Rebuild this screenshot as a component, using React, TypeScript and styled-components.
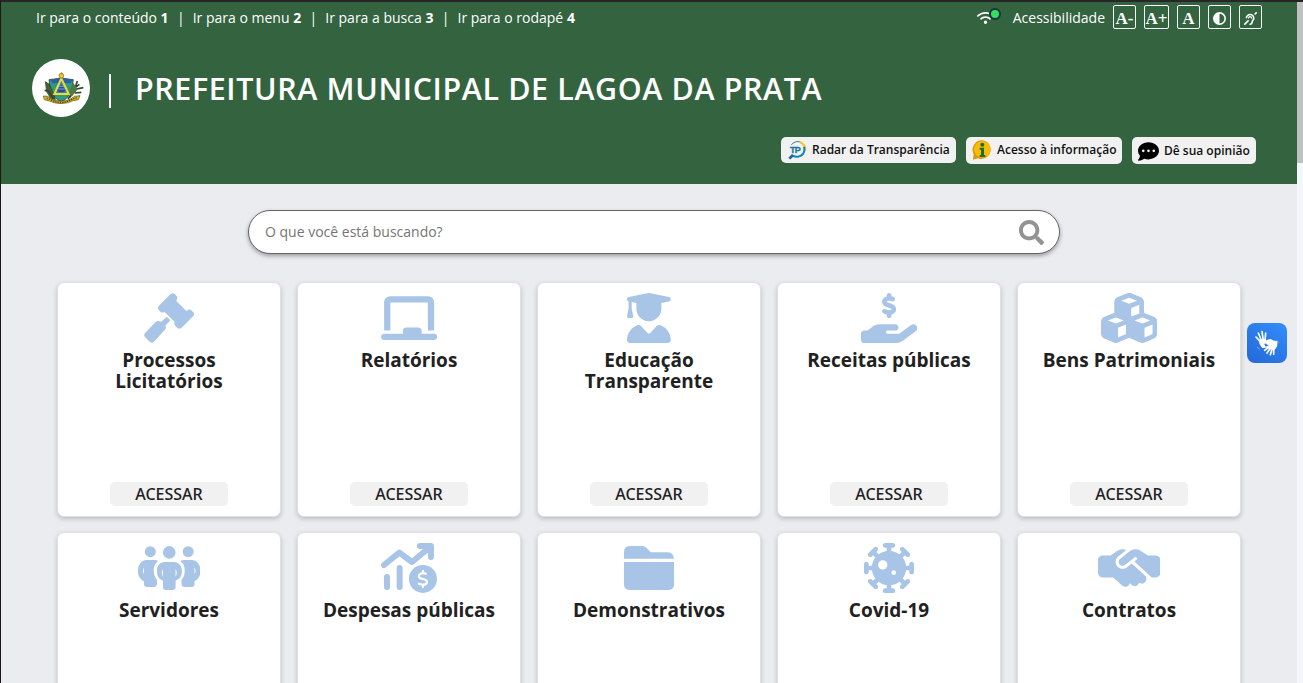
import React from 'react';
import styled, { createGlobalStyle } from 'styled-components';
import {
  FaUserGraduate,
  FaCubes,
  FaHandHoldingDollar,
  FaHandshakeSimple,
  FaChalkboard,
  FaVirusCovid,
  FaWifi,
  FaCircleHalfStroke,
  FaEarDeaf,
  FaCommentDots,
  FaDollarSign,
} from 'react-icons/fa6';
import { FaSearch } from 'react-icons/fa';

const GlobalStyle = createGlobalStyle`
  * { box-sizing: border-box; }
  body {
    margin: 0;
    overflow: hidden;
    background: #ebecf0;
    font-family: "Open Sans", "Noto Sans", sans-serif;
    color: #212121;
  }
  a { color: inherit; text-decoration: none; }
  button { font: inherit; color: inherit; border: 0; padding: 0; cursor: pointer; }
`;

const Window = styled.div`
  display: flex;
  height: 683px;
  overflow: hidden;
  border-top: 2px solid #29262a;
  border-left: 1px solid #1d171b;
`;

const Page = styled.div`
  flex: 1;
  min-width: 0;
`;

const ScrollTrack = styled.div`
  width: 6px;
  background: #f4f6fb;
`;

const ScrollThumb = styled.div`
  height: 161px;
  background: #c1c1c1;
`;

const Header = styled.header`
  display: flex;
  flex-direction: column;
  height: 182px;
  background: #33633f;
  color: #fff;
`;

const TopBar = styled.div`
  display: flex;
  justify-content: space-between;
  height: 32px;
  padding: 3px 35px 0 35px;
  font-size: 14px;
  line-height: 26px;
`;

const SkipLinks = styled.nav`
  display: flex;
  white-space: pre;
`;

const SkipLink = styled.a`
  & + &::before {
    content: "|";
    margin: 0 8.1px 0 8.3px;
  }
`;

const Accessibility = styled.div`
  display: flex;
  align-items: flex-start;
`;

const AccessLabel = styled.span`
  margin: 0 8px 0 12px;
`;

const Signal = styled.span`
  position: relative;
  display: flex;
  width: 24px;
  height: 24px;
  padding-top: 6px;
  svg { width: 17px; height: 14px; }
`;

const Dot = styled.i`
  position: absolute;
  left: 12px;
  top: 3px;
  width: 12px;
  height: 12px;
  border: 2px solid #17304a;
  border-radius: 50%;
  background: #35de5b;
`;

const AccessButton = styled.button<{ $w?: number; $gap?: number }>`
  display: flex;
  align-items: center;
  justify-content: center;
  width: ${(p) => p.$w ?? 23}px;
  height: 24px;
  margin-right: ${(p) => p.$gap ?? 8}px;
  border: 1px solid #fff;
  border-radius: 2px;
  background: transparent;
  color: #fff;
  font: bold 17px/22px "Liberation Serif", serif;
  padding-top: 3px;
  svg { width: 13px; height: 13px; }
`;

const Brand = styled.div`
  display: flex;
  align-items: center;
  height: 58px;
  margin: 25px 0 0 31px;
`;

const Crest = styled.div`
  width: 58px;
  height: 58px;
  border-radius: 50%;
  background: #fff;
  svg { display: block; width: 58px; height: 58px; }
`;

const Divider = styled.span`
  width: 2px;
  height: 34px;
  margin: 5px 24px 0 19px;
  background: #fff;
`;

const Title = styled.h1`
  margin: 2px 0 0;
  font-size: 30.4px;
  font-weight: 600;
  line-height: 44px;
  letter-spacing: 0.63px;
  white-space: nowrap;
`;

const HeaderActions = styled.div`
  display: flex;
  justify-content: flex-end;
  gap: 10px;
  margin: 20px 41px 0 0;
`;

const ActionButton = styled.a<{ $w: number; $h: number; $drop?: number }>`
  display: flex;
  align-items: center;
  gap: 5px;
  width: ${(p) => p.$w}px;
  height: ${(p) => p.$h}px;
  padding: ${(p) => p.$drop ?? 0}px 0 0 6px;
  border-radius: 5px;
  background: #f1f1f1;
  color: #111;
  font-size: 12px;
  font-weight: 600;
  line-height: 18px;
  white-space: nowrap;
  svg { flex: none; }
`;

const Search = styled.form`
  display: flex;
  align-items: center;
  justify-content: space-between;
  width: 812px;
  height: 44px;
  margin: 26px 0 0 247px;
  padding: 0 15px 0 16px;
  border: 1px solid #666;
  border-radius: 22px;
  background: #fff;
  box-shadow: 0 2px 4px rgba(0, 0, 0, 0.35);
  font-size: 14px;
  color: #757575;
  span { padding-bottom: 1px; }
  svg { width: 25px; height: 25px; color: #939393; }
`;

const Grid = styled.main`
  display: grid;
  grid-template-columns: repeat(5, 224px);
  grid-auto-rows: 235px;
  gap: 15px 16px;
  margin: 28px 0 0 56px;
`;

const Card = styled.article`
  display: flex;
  flex-direction: column;
  align-items: center;
  padding: 10px 9px;
  border: 1px solid #dfe0e3;
  border-radius: 7px;
  background: #fff;
  box-shadow: 0 2px 5px rgba(0, 0, 0, 0.2);
`;

const CardIcon = styled.div<{ $w: number }>`
  height: 50px;
  color: #a8c4e7;
  > svg { display: block; height: 50px; width: ${(p) => p.$w}px; }
`;

const CardTitle = styled.h2`
  margin: 7px 0 0;
  font-size: 19px;
  font-weight: 700;
  line-height: 21px;
  text-align: center;
`;

const CardButton = styled.button`
  width: 118px;
  height: 24px;
  margin-top: auto;
  border-radius: 5px;
  background: #f1f1f1;
  font-family: "Noto Sans", "Open Sans", sans-serif;
  font-size: 16px;
  font-weight: 500;
  line-height: 24px;
`;

const SignWidget = styled.button`
  position: fixed;
  left: 1247px;
  top: 323px;
  width: 40px;
  height: 40px;
  border-radius: 8px;
  background: linear-gradient(35deg, #2468d8, #338dfb);
  svg { display: block; }
`;

const Gavel = () => (
  <svg viewBox="0 0 150 150" fill="currentColor">
    <path d="M80 3Q86-2 92 3L98 9Q102 14 98 20L97 24L127 54Q133 48 140 50L148 58Q152 63 148 69L112 105Q106 110 100 105L94 99Q90 94 92 87L62 57Q56 60 50 57L44 51Q40 45 44 39Z" />
    <path d="M34 88Q40 82 46 85L52 86L68 71L79 82L64 98Q68 104 63 110L29 147Q23 152 18 147L3 132Q-2 126 3 120Z" />
  </svg>
);

const SIDE_BODY =
  'M26 51H49Q56 51 61 54C50 62 46 72 48 90C49 100 53 106 57 110V123Q56 132 48 132H27Q18 132 18 124V115C6 108 0 99 0 84C0 65 11 51 26 51ZM18 73Q12 83 18 94Z';

const People = () => (
  <svg viewBox="0 0 188 150" fill="currentColor" fillRule="evenodd">
    <circle cx="37" cy="26" r="16.5" />
    <circle cx="151" cy="26" r="16.5" />
    <circle cx="94" cy="28" r="19" />
    <path d={SIDE_BODY} />
    <path d={SIDE_BODY} transform="translate(188 0) scale(-1 1)" />
    <path d="M81 57H107C122 57 132 68 132 84C132 101 124 109 113 113V132Q113 141 104 141H84Q75 141 75 132V113C64 109 57 101 57 84C57 68 66 57 81 57ZM75 78Q68 89 75 101ZM113 78Q120 89 113 101Z" />
  </svg>
);

const MoneyChart = () => (
  <svg viewBox="0 0 169 150" fill="none" stroke="currentColor" strokeLinecap="round" strokeLinejoin="round">
    <path d="M9 66L55 29L93 57L144 15" strokeWidth="18" />
    <path d="M117 9H150V42" strokeWidth="18" />
    <path d="M128 9H150V29Z" fill="currentColor" strokeWidth="8" />
    <path d="M18 102V132M56 75V132" strokeWidth="18" />
    <circle cx="126" cy="108" r="42" fill="currentColor" stroke="none" />
    <FaDollarSign x="98.5" y="80.5" size={55} color="#fff" />
  </svg>
);

const Folder = () => (
  <svg viewBox="0 0 150 150" fill="currentColor">
    <path d="M0 47V27Q0 9 18 9H54Q62 9 68 15L77 25Q79 28 83 28H132Q148 29 150 47Z" />
    <path d="M0 57H150V124Q150 141 133 141H17Q0 141 0 124Z" />
  </svg>
);

const CrestArt = () => (
  <svg viewBox="0 0 174 174">
    <path d="M51 62L88 57L124 62L120 90Q110 120 88 128Q62 118 54 90Z" fill="#2f9a7c" stroke="#222" strokeWidth="2" />
    <path d="M54 62L88 57L121 62L116 72L62 73Z" fill="#2c5fae" />
    <path d="M40 68L52 76L62 98L70 122L56 118L44 98Z" fill="#4b6134" stroke="#2a3020" strokeWidth="2" />
    <path d="M38 94L50 96L64 118M136 66L128 92L108 120M154 86L134 90L112 116M142 76L122 92M148 100L128 102" stroke="#31472f" strokeWidth="5" fill="none" />
    <path d="M124 72L136 90L120 112L108 106Z" fill="#54793f" />
    <path d="M88 58L67 105H110Z" fill="#3f86c9" stroke="#f0dc2b" strokeWidth="6" />
    <path d="M76 94L88 76L101 94L96 100H80Z" fill="#234f91" />
    <path d="M82 82H95M79 90H98" stroke="#a9c9e6" strokeWidth="2" />
    <circle cx="88" cy="50" r="7" fill="#edcf29" stroke="#6d5a1a" strokeWidth="2" />
    <path d="M88 40V46" stroke="#a58a1d" strokeWidth="3" />
    <path d="M34 111L47 112L60 121Q88 132 114 121L128 112L144 110L139 122L124 125Q88 142 52 126L37 122Z" fill="#d8b92a" stroke="#5b4915" strokeWidth="2" />
    <path d="M44 117L60 124Q88 138 118 122L134 116" stroke="#54420f" strokeWidth="4" strokeDasharray="4 3" fill="none" />
  </svg>
);

const RadarLogo = () => (
  <svg width="20" height="20" viewBox="0 0 60 60">
    <path d="M13 14Q28-2 46 9" fill="none" stroke="#3c7891" strokeWidth="3" />
    <path d="M38 6Q57 14 55 32" fill="none" stroke="#f1c925" strokeWidth="6" />
    <path d="M51 20Q57 43 34 50Q25 52 18 47" fill="none" stroke="#1784ba" strokeWidth="6" />
    <path d="M18 45L7 56" stroke="#176994" strokeWidth="8" />
    <text x="9" y="38" fontFamily="Liberation Sans, sans-serif" fontSize="27" fontWeight="700" letterSpacing="-2" fill="#1879a7" stroke="#1879a7" strokeWidth="1">TP</text>
  </svg>
);

const InfoLogo = () => (
  <svg width="20" height="20" viewBox="0 0 60 60">
    <path d="M31 1A28 28 0 1 1 18 55L3 59L5 42A28 28 0 0 1 31 1Z" fill="#d99a08" />
    <circle cx="31" cy="28" r="25" fill="#fdbb09" />
    <circle cx="31" cy="14" r="6" fill="#17712b" />
    <path d="M23 23H36V45H40V51H23V45H27V29H23Z" fill="#17712b" />
  </svg>
);

const SigningHands = () => (
  <svg width="40" height="40" viewBox="0 0 120 120" fill="none" stroke="#fff" strokeLinecap="round" strokeLinejoin="round">
    <path d="M42 58L27 42M44 54L34 30M49 52L45 26M54 54L56 30" strokeWidth="5" />
    <path d="M37 52L54 49L59 56L50 63L56 73L46 74Q37 64 37 52Z" fill="#fff" strokeWidth="3" />
    <path d="M53 82L65 72M60 90L70 76M70 95L75 78M80 94L80 77M59 58L70 62" strokeWidth="5" />
    <path d="M60 52Q72 46 80 54L90 56Q92 70 82 80L67 77L58 72L68 67L56 61Z" fill="#fff" strokeWidth="3" />
    <path d="M31 73L37 78M90 53L94 58" strokeWidth="2" opacity=".6" />
  </svg>
);

interface Service {
  title: string;
  icon: React.ReactNode;
  width: number;
  action?: string;
}

const services: Service[] = [
  { title: 'Processos Licitatórios', icon: <Gavel />, width: 50, action: 'ACESSAR' },
  { title: 'Relatórios', icon: <FaChalkboard />, width: 56.25, action: 'ACESSAR' },
  { title: 'Educação Transparente', icon: <FaUserGraduate />, width: 43.75, action: 'ACESSAR' },
  { title: 'Receitas públicas', icon: <FaHandHoldingDollar />, width: 56.25, action: 'ACESSAR' },
  { title: 'Bens Patrimoniais', icon: <FaCubes />, width: 56.25, action: 'ACESSAR' },
  { title: 'Servidores', icon: <People />, width: 62.5 },
  { title: 'Despesas públicas', icon: <MoneyChart />, width: 56.25 },
  { title: 'Demonstrativos', icon: <Folder />, width: 50 },
  { title: 'Covid-19', icon: <FaVirusCovid />, width: 50 },
  { title: 'Contratos', icon: <FaHandshakeSimple />, width: 62.5 },
];

const skipLinks = ['Ir para o conteúdo', 'Ir para o menu', 'Ir para a busca', 'Ir para o rodapé'];

export default function App() {
  return (
    <Window>
      <GlobalStyle />
      <Page>
        <Header>
          <TopBar>
            <SkipLinks>
              {skipLinks.map((label, i) => (
                <SkipLink key={label} href="#">
                  {label} <b>{i + 1}</b>
                </SkipLink>
              ))}
            </SkipLinks>
            <Accessibility>
              <Signal><FaWifi /><Dot /></Signal>
              <AccessLabel>Acessibilidade</AccessLabel>
              <AccessButton>A-</AccessButton>
              <AccessButton $w={25}>A+</AccessButton>
              <AccessButton>A</AccessButton>
              <AccessButton><FaCircleHalfStroke /></AccessButton>
              <AccessButton $gap={0}><FaEarDeaf /></AccessButton>
            </Accessibility>
          </TopBar>
          <Brand>
            <Crest><CrestArt /></Crest>
            <Divider />
            <Title>PREFEITURA MUNICIPAL DE LAGOA DA PRATA</Title>
          </Brand>
          <HeaderActions>
            <ActionButton href="#" $w={175} $h={26}><RadarLogo />Radar da Transparência</ActionButton>
            <ActionButton href="#" $w={156} $h={26.5}><InfoLogo />Acesso à informação</ActionButton>
            <ActionButton href="#" $w={124} $h={27} $drop={1}><FaCommentDots size={21} color="#000" />Dê sua opinião</ActionButton>
          </HeaderActions>
        </Header>
        <Search>
          <span>O que você está buscando?</span>
          <FaSearch />
        </Search>
        <Grid>
          {services.map((s) => (
            <Card key={s.title}>
              <CardIcon $w={s.width}>{s.icon}</CardIcon>
              <CardTitle>{s.title}</CardTitle>
              {s.action && <CardButton>{s.action}</CardButton>}
            </Card>
          ))}
        </Grid>
      </Page>
      <ScrollTrack><ScrollThumb /></ScrollTrack>
      <SignWidget aria-label="Libras"><SigningHands /></SignWidget>
    </Window>
  );
}
